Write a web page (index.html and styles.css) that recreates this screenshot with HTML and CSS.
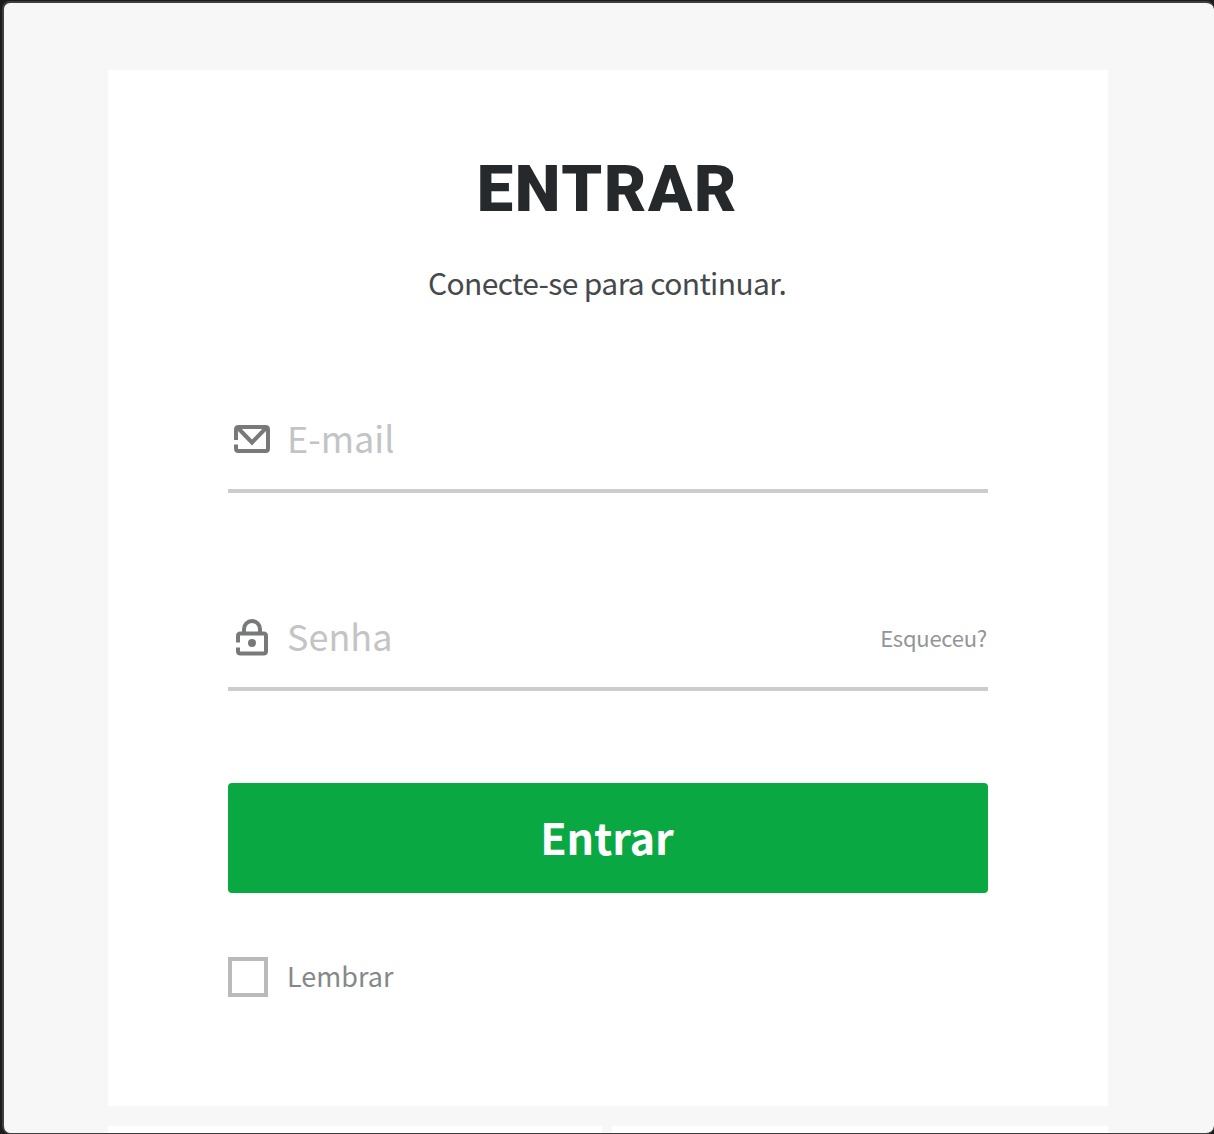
FILE: index.html
```html
<!DOCTYPE html>
<html lang="pt-BR">
<head>
<meta charset="utf-8">
<title>Entrar</title>
<link rel="stylesheet" href="styles.css">
</head>
<body>
<div class="window">
  <main class="card">
    <h1 class="title">ENTRAR</h1>
    <p class="subtitle">Conecte-se para continuar.</p>
    <form class="form">
      <div class="field">
        <svg class="icon" viewBox="0 0 48 48" fill="none" stroke="#77797a" stroke-width="4">
          <path d="M8 28V17.500Q8 15 10.500 15H37.500Q40 15 40 17.500V36.500Q40 39 37.500 39H10.500Q8 39 8 36.500V32.500"/>
          <path d="M10 16L24 30.500L38 16"/>
        </svg>
        <span class="placeholder">E-mail</span>
      </div>
      <div class="field password-field">
        <svg class="icon" viewBox="0 0 48 48" fill="none" stroke="#77797a" stroke-width="4">
          <path d="M10 32.500V26Q10 23.500 12.500 23.500H35.500Q38 23.500 38 26V41Q38 43.500 35.500 43.500H12.500Q10 43.500 10 41V37.500"/>
          <path d="M16 23V19a8 8 0 0 1 16 0V23"/>
          <circle cx="24" cy="33" r="4" fill="#77797a" stroke="none"/>
        </svg>
        <span class="placeholder">Senha</span>
        <a class="forgot">Esqueceu?</a>
      </div>
      <button class="submit" type="button">Entrar</button>
      <label class="remember"><span class="box"></span><span class="remember-text">Lembrar</span></label>
    </form>
  </main>
  <div class="options"><div class="option"></div><div class="option"></div></div>
</div>
</body>
</html>
```
FILE: styles.css
```css
* { box-sizing: border-box; }
body {
  margin: 0;
  height: 1134px;
  padding: 1px 0 0 2px;
  overflow: hidden;
  background: #1c1c1d;
  font-family: "Noto Sans CJK SC", "Noto Sans", sans-serif;
}
.window {
  height: 1133px;
  padding: 67px 106px 0 104px;
  overflow: hidden;
  border: solid #3d403f;
  border-width: 2px 0 1px 2px;
  border-radius: 8px;
  background: #f7f7f7;
}
.card {
  width: 1000px;
  height: 1036px;
  padding: 79px 120px 0;
  background: #fff;
}
.title {
  margin: 0;
  height: 80px;
  padding-right: 1px;
  line-height: 80px;
  text-align: center;
  font-family: Roboto, sans-serif;
  font-size: 65px;
  font-weight: 900;
  letter-spacing: 1.7px;
  color: #25292c;
}
.subtitle {
  margin: 23px 0 0;
  height: 60px;
  padding-right: 2px;
  line-height: 60px;
  text-align: center;
  font-size: 30px;
  letter-spacing: -0.62px;
  color: #45494c;
}
.form { margin-top: 81px; }
.field {
  display: flex;
  align-items: center;
  height: 100px;
  border-bottom: 4px solid #ccc;
}
.password-field { margin-top: 98px; }
.icon { width: 48px; height: 48px; margin-top: -10px; }
.placeholder {
  margin: -8px 0 0 11px;
  line-height: 60px;
  font-size: 36px;
  color: #c3c4c5;
}
.forgot {
  margin: -4px 1px 0 auto;
  font-size: 22px;
  line-height: 40px;
  letter-spacing: -0.25px;
  color: #929597;
}
.submit {
  display: block;
  width: 760px;
  height: 110px;
  margin-top: 92px;
  padding: 0 2px 4px 0;
  border: 0;
  border-radius: 4px;
  background: #0aa843;
  color: #fff;
  font: 700 43px/106px "Noto Sans CJK SC", sans-serif;
}
.remember { display: flex; align-items: center; gap: 19px; height: 40px; margin-top: 64px; }
.box { width: 40px; height: 40px; border: 4px solid #b9babb; }
.remember-text { margin-top: -2px; font-size: 27px; line-height: 40px; color: #85888a; }
.options { display: flex; gap: 10px; width: 1000px; height: 20px; margin-top: 20px; }
.option { flex: 0 0 494px; background: #fff; }
.option:last-child { flex-basis: 496px; }
```
